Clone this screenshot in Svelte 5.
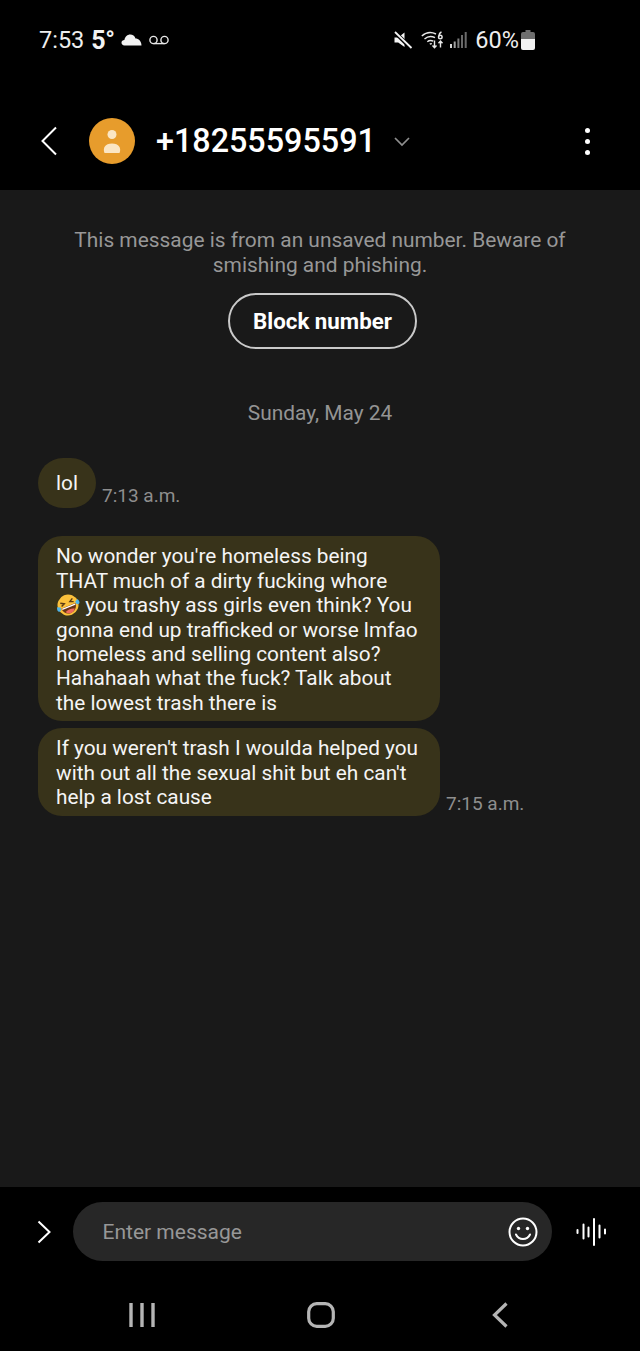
<script>
  const messages = [
    { id: 1, lines: [['lol']], time: '7:13 a.m.', short: true },
    { id: 2, lines: [['No wonder you\'re homeless being'], ['THAT much of a dirty fucking whore'], ['EMOJI', ' you trashy ass girls even think? You'], ['gonna end up trafficked or worse lmfao'], ['homeless and selling content also?'], ['Hahahaah what the fuck? Talk about'], ['the lowest trash there is']] },
    { id: 3, lines: [['If you weren\'t trash I woulda helped you'], ['with out all the sexual shit but eh can\'t'], ['help a lost cause']], time: '7:15 a.m.' }
  ];
</script>

<div class="screen">
  <header class="top">
    <div class="status">
      <div class="status-left">
        <span class="clock">7:53</span>
        <span class="temp">5°</span>
        <svg class="cloud" width="21" height="13" viewBox="0 0 21 13"><path d="M3.500 12.500C1.500 12.500.5 11.200.5 9.600.5 8 1.800 6.900 3.400 6.900 4 3.600 6.400 1.500 9.200 1.500c2.500 0 4.600 1.600 5.300 4 3 0 5.800 2.200 6 7z" fill="#f2f2f2"/></svg>
        <svg width="20" height="10" viewBox="0 0 20 10"><g fill="none" stroke="#e8e8e8" stroke-width="1.400"><circle cx="4.500" cy="5" r="3.600"/><circle cx="15.500" cy="5" r="3.600"/><path d="M4.500 8.600h11"/></g></svg>
      </div>
      <div class="status-right">
        <svg width="19" height="19" viewBox="0 0 19 19"><path d="M.5 6.500h3.700L10.500 1.500v14.500L4.200 11.500H.5z" fill="#f4f4f4"/><path d="M1 1.500L17.500 17.500" stroke="#000" stroke-width="4"/><path d="M1 1L17.500 17" stroke="#f4f4f4" stroke-width="1.800"/></svg>
        <svg class="wifi" width="23" height="18" viewBox="0 0 23 18"><g fill="none" stroke="#e8e8e8" stroke-width="1.400"><path d="M.8 5C5 1.300 10.500.8 15 3"/><path d="M3.500 8C6.500 5.300 10.500 4.800 14 6.700"/><path d="M6.300 10.800c1.700-1.400 4-1.600 6-.6"/><path d="M8.800 13.200c.6-.4 1.300-.5 2-.3"/><path d="M13.500 9.500v7M11.500 14.500l2 2.200 2-2.200"/><path d="M19.500 16.500v-6M17.500 12.300l2-2.200 2 2.200"/><circle cx="19.300" cy="6" r="1.800"/><path d="M18 5.500C18 3 19 1.500 20.500 1"/></g></svg>
        <svg class="signal" width="17" height="18" viewBox="0 0 17 18"><rect x="0" y="13" width="2" height="4" fill="#d6d6d6"/><rect x="3.700" y="10.500" width="2" height="6.500" fill="#a0a0a0"/><rect x="7.400" y="7.500" width="2" height="9.500" fill="#7c7c7c"/><rect x="11" y="4" width="2" height="13" fill="#6a6a6a"/><rect x="14.700" y="1" width="2" height="16" fill="#6a6a6a"/></svg>
        <span class="pct">60%</span>
        <svg class="battery" width="14" height="20" viewBox="0 0 14 20"><path d="M4.500 0h5v2h2.500a2 2 0 0 1 2 2v5H0V4a2 2 0 0 1 2-2h2.500z" fill="#6f6f6f"/><path d="M0 9h14v9a2 2 0 0 1-2 2H2a2 2 0 0 1-2-2z" fill="#f2f2f2"/></svg>
      </div>
    </div>
    <div class="bar">
      <svg class="back" width="18" height="30" viewBox="0 0 18 30"><path d="M16 1.500L2.500 15 16 28.500" fill="none" stroke="#fff" stroke-width="2"/></svg>
      <div class="avatar">
        <svg width="22" height="26" viewBox="0 0 22 26"><circle cx="11" cy="6.500" r="4.500" fill="#fbe6c4"/><path d="M3.500 25c-2-5 .5-9.500 7.500-9.500S20.500 20 18.500 25z" fill="#fbe6c4"/></svg>
      </div>
      <span class="number">+18255595591</span>
      <svg class="chev" width="16" height="10" viewBox="0 0 16 10"><path d="M1 1l7 7 7-7" fill="none" stroke="#8f8f8f" stroke-width="1.700"/></svg>
      <div class="dots"><i></i><i></i><i></i></div>
    </div>
  </header>

  <main class="thread">
    <p class="warn">This message is from an unsaved number. Beware of<br />smishing and phishing.</p>
    <button class="block">Block number</button>
    <div class="date">Sunday, May 24</div>
    {#each messages as m (m.id)}
      <div class="row" class:first={m.id === 1}>
        <div class="bubble" class:short={m.short} class:last={m.id === 3}>
          {#each m.lines as line}
            <div class="line">
              {#each line as part}
                {#if part === 'EMOJI'}
                  <svg class="emoji" width="24" height="24" viewBox="0 0 24 24">
                    <g transform="rotate(-22 12 12)">
                      <circle cx="12" cy="12" r="10.500" fill="#fbc13b"/>
                      <path d="M5.500 7.500l3.500 2-3.500 1.500M18.500 7.500l-3.500 2 3.500 1.500" fill="none" stroke="#5a3a14" stroke-width="1.400"/>
                      <path d="M4.500 13h15c0 4.500-3.200 7.500-7.500 7.500S4.500 17.500 4.500 13z" fill="#6b3415"/>
                      <path d="M7 17.800c3-1.700 7-1.700 10 0-1.300 1.700-3 2.700-5 2.700s-3.700-1-5-2.700z" fill="#ef6a5c"/>
                      <path d="M5 13.200h14v1.300H5z" fill="#fff"/>
                      <path d="M1 10c-1 2-1.200 4.500.5 5 1.800.4 3-1.600 2.500-3.500zM23 10c1 2 1.200 4.500-.5 5-1.800.4-3-1.600-2.500-3.500z" fill="#4fb4e8"/>
                    </g>
                  </svg>
                {:else}{part}{/if}
              {/each}
            </div>
          {/each}
        </div>
        {#if m.time}<span class="time">{m.time}</span>{/if}
      </div>
    {/each}
  </main>

  <footer class="bottom">
    <div class="composer">
      <svg class="expand" width="14" height="24" viewBox="0 0 14 24"><path d="M1.500 1.500L12.500 12 1.500 22.500" fill="none" stroke="#fff" stroke-width="2"/></svg>
      <div class="input">
        <span class="placeholder">Enter message</span>
        <svg width="30" height="30" viewBox="0 0 30 30"><circle cx="15" cy="15" r="13.500" fill="none" stroke="#fff" stroke-width="2"/><circle cx="10.500" cy="11.500" r="1.700" fill="#fff"/><circle cx="19.500" cy="11.500" r="1.700" fill="#fff"/><path d="M8 17.500c1.500 3.200 4 4.500 7 4.500s5.500-1.300 7-4.500" fill="none" stroke="#fff" stroke-width="2" stroke-linecap="round"/></svg>
      </div>
      <svg class="voice" width="30" height="28" viewBox="0 0 30 28"><g stroke="#fff" stroke-width="2" stroke-linecap="round"><path d="M1.500 12v3M7.500 6.500v14M12.500 9.500v9M18 1v26M23.500 7.500v12M29 11.500v4"/></g></svg>
    </div>
    <nav class="nav">
      <svg width="26" height="26" viewBox="0 0 26 26"><path d="M2 1v24M13 1v24M24 1v24" stroke="#b5b5b5" stroke-width="3.400"/></svg>
      <svg width="28" height="26" viewBox="0 0 28 26"><rect x="1.700" y="1.700" width="24.600" height="22.600" rx="8" fill="none" stroke="#b5b5b5" stroke-width="3.200"/></svg>
      <svg width="16" height="26" viewBox="0 0 16 26"><path d="M14.500 1.500L2.500 13l12 11.500" fill="none" stroke="#b5b5b5" stroke-width="3.200"/></svg>
    </nav>
  </footer>
</div>

<style>
  :global(body) { margin: 0; background: #000; }
  .screen {
    width: 640px; height: 1351px; display: flex; flex-direction: column;
    font-family: Roboto, "Liberation Sans", sans-serif; color: #fff; overflow: hidden;
  }
  .top { height: 190px; flex: none; background: #000; }
  .status {
    display: flex; justify-content: space-between; align-items: center;
    height: 24px; padding: 28px 105px 0 39px;
  }
  .status-left { display: flex; align-items: center; }
  .clock { font-size: 23.500px; color: #eee; }
  .temp { font-size: 25px; font-weight: 700; margin: 0 7px 0 7px; color: #f2f2f2; letter-spacing: -0.500px; }
  .cloud { margin-right: 7px; margin-top: -2px; }
  .status-right { display: flex; align-items: center; }
  .wifi { margin-left: 8px; }
  .signal { margin-left: 6px; }
  .pct { font-size: 23.500px; margin-left: 8px; color: #eee; }
  .battery { margin-left: 2px; }
  .bar { display: flex; align-items: center; height: 48px; margin-top: 65px; padding-left: 40px; }
  .back { flex: none; }
  .avatar {
    width: 46px; height: 46px; border-radius: 50%; background: #e79c2c; margin-left: 31px;
    display: flex; align-items: center; justify-content: center; flex: none;
  }
  .number { font-size: 32.300px; font-weight: 500; margin-left: 21px; }
  .chev { margin-left: 18px; margin-top: 1px; }
  .dots { margin-left: auto; margin-right: 50px; display: flex; flex-direction: column; gap: 6px; }
  .dots i { width: 5px; height: 5px; border-radius: 50%; background: #fff; display: block; }
  .thread { flex: 1; background: #191919; padding-top: 38px; display: flex; flex-direction: column; }
  .warn { margin: 0; text-align: center; font-size: 20.900px; line-height: 24.500px; color: #979797; }
  .block {
    align-self: center; width: 189px; height: 56px; margin: 16px 0 0 5px; border-radius: 28px;
    border: 2px solid #c9c9c9; background: transparent; color: #fff;
    font: 700 22.300px Roboto, sans-serif; padding: 0;
  }
  .date { text-align: center; font-size: 20.900px; line-height: 24px; color: #949494; margin-top: 52px; }
  .row { display: flex; align-items: flex-end; padding-left: 38px; margin-top: 7px; gap: 6px; }
  .row.first { margin-top: 33px; margin-bottom: 21px; }
  .bubble {
    background: #38331a; border-radius: 24px; padding: 8px 18px 6px;
    font-size: 20.800px; line-height: 24.400px; color: #f5f5f5; width: 366px; white-space: nowrap;
  }
  .bubble.last { padding-bottom: 7px; }
  .bubble.short { width: auto; padding: 13px 18px; border-radius: 25px; }
  .line { display: flex; align-items: center; white-space: pre; }
  .emoji { flex: none; }
  .time { font-size: 19px; color: #8e8e8e; line-height: 22px; padding-bottom: 1px; }
  .bottom { height: 164px; flex: none; background: #000; display: flex; flex-direction: column; }
  .composer { display: flex; align-items: center; padding: 15px 0 0 37px; }
  .input {
    width: 479px; height: 59px; margin-left: 22px; box-sizing: border-box; background: #272727; border-radius: 30px;
    display: flex; align-items: center; justify-content: space-between; padding: 0 14px 0 29.500px;
  }
  .placeholder { font-size: 21px; color: #979797; }
  .voice { margin-left: 24px; }
  .nav { display: flex; align-items: center; height: 26px; margin-top: 41px; padding-left: 129px; }
  .nav svg:nth-child(2) { margin-left: 152px; }
  .nav svg:nth-child(3) { margin-left: 157px; }
</style>
